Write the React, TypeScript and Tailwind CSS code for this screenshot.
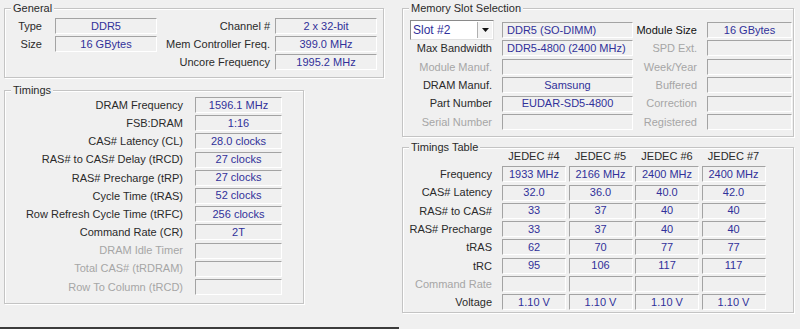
import React from "react";

const FONT = { fontFamily: '"Liberation Sans", Arial, sans-serif' };

function Group({ title, className, children }: { title: string; className: string; children?: React.ReactNode }) {
  return (
    <div className={"relative border border-[#c4c4c4] shadow-[inset_1px_1px_0_#ffffff,1px_1px_0_#ffffff] " + className}>
      <div className="absolute -top-[8px] left-[6px] px-[2px] bg-[#f0f0f0] leading-[14px] text-[#2a2a2a]">{title}</div>
      {children}
    </div>
  );
}

function Box({ children, className = "", align = "center" }: { children?: React.ReactNode; className?: string; align?: "center" | "left" }) {
  return (
    <div
      className={
        "h-[16px] border border-t-[#a3a3a3] border-l-[#a3a3a3] border-b-[#ffffff] border-r-[#ffffff] flex items-center text-[#30309a] leading-none whitespace-nowrap overflow-hidden " +
        (align === "center" ? "justify-center " : "justify-start pl-[4px] ") +
        className
      }
    >
      {children}
    </div>
  );
}

const dis = "text-[#a6a6a6]";
const lab = "text-[#2a2a2a]";

export default function App() {
  const timings: [string, string, boolean][] = [
    ["DRAM Frequency", "1596.1 MHz", true],
    ["FSB:DRAM", "1:16", true],
    ["CAS# Latency (CL)", "28.0 clocks", true],
    ["RAS# to CAS# Delay (tRCD)", "27 clocks", true],
    ["RAS# Precharge (tRP)", "27 clocks", true],
    ["Cycle Time (tRAS)", "52 clocks", true],
    ["Row Refresh Cycle Time (tRFC)", "256 clocks", true],
    ["Command Rate (CR)", "2T", true],
    ["DRAM Idle Timer", "", false],
    ["Total CAS# (tRDRAM)", "", false],
    ["Row To Column (tRCD)", "", false],
  ];
  const slotRows: [string, boolean, string, "center" | "left", string, boolean, string][] = [
    ["Max Bandwidth", true, "DDR5-4800 (2400 MHz)", "left", "SPD Ext.", false, ""],
    ["Module Manuf.", false, "", "center", "Week/Year", false, ""],
    ["DRAM Manuf.", true, "Samsung", "center", "Buffered", false, ""],
    ["Part Number", true, "EUDAR-SD5-4800", "center", "Correction", false, ""],
    ["Serial Number", false, "", "center", "Registered", false, ""],
  ];
  const table: [string, boolean, string[]][] = [
    ["Frequency", true, ["1933 MHz", "2166 MHz", "2400 MHz", "2400 MHz"]],
    ["CAS# Latency", true, ["32.0", "36.0", "40.0", "42.0"]],
    ["RAS# to CAS#", true, ["33", "37", "40", "40"]],
    ["RAS# Precharge", true, ["33", "37", "40", "40"]],
    ["tRAS", true, ["62", "70", "77", "77"]],
    ["tRC", true, ["95", "106", "117", "117"]],
    ["Command Rate", false, ["", "", "", ""]],
    ["Voltage", true, ["1.10 V", "1.10 V", "1.10 V", "1.10 V"]],
  ];

  return (
    <div className="flex w-[800px] h-[329px] bg-[#f0f0f0] text-[11px] overflow-hidden" style={FONT}>
      {/* Left panel */}
      <div className="w-[399px] h-[329px] flex flex-col border-b-2 border-[#3c3c3c]">
        <Group title="General" className="ml-[4px] mt-[8px] w-[380px] h-[70px]">
          <div className="flex flex-col gap-[2px] pt-[9px]">
            <div className="flex items-center h-[16px]">
              <div className={"w-[37px] text-right " + lab}>Type</div>
              <Box className="ml-[13px] w-[102px]">DDR5</Box>
              <div className={"w-[113px] text-right " + lab}>Channel #</div>
              <Box className="ml-[5px] w-[102px]">2 x 32-bit</Box>
            </div>
            <div className="flex items-center h-[16px]">
              <div className={"w-[37px] text-right " + lab}>Size</div>
              <Box className="ml-[13px] w-[102px]">16 GBytes</Box>
              <div className={"w-[113px] text-right " + lab}>Mem Controller Freq.</div>
              <Box className="ml-[5px] w-[102px]">399.0 MHz</Box>
            </div>
            <div className="flex items-center h-[16px]">
              <div className="w-[152px]" />
              <div className={"w-[113px] text-right " + lab}>Uncore Frequency</div>
              <Box className="ml-[5px] w-[102px]">1995.2 MHz</Box>
            </div>
          </div>
        </Group>
        <Group title="Timings" className="ml-[4px] mt-[12px] w-[300px] h-[214px]">
          <div className="flex flex-col gap-[2.2px] pt-[6px]">
            {timings.map(([l, v, en]) => (
              <div key={l} className="flex items-center h-[16px]">
                <div className={"w-[178px] text-right whitespace-nowrap " + (en ? lab : dis)}>{l}</div>
                <Box className="ml-[12px] w-[87px]">{v}</Box>
              </div>
            ))}
          </div>
        </Group>
      </div>

      {/* Right panel */}
      <div className="flex-1 h-[329px] flex flex-col">
        <Group title="Memory Slot Selection" className="ml-[3px] mt-[8px] w-[392px] h-[129px]">
          <div className="flex flex-col gap-[2.4px] pt-[13px]">
            <div className="flex items-center h-[16px]">
              <div className="ml-[7px] w-[84px] h-[20px] bg-white border border-t-[#8a8a8a] border-l-[#8a8a8a] border-b-[#e0e0e0] border-r-[#e0e0e0] flex items-center shrink-0">
                <span className="pl-[2px] flex-1 text-[#30309a] text-[12px] leading-none">Slot #2</span>
                <div className="w-[15px] h-[16px] mr-[1px] bg-[#f4f4f4] border-l border-[#b0b0b0] flex items-center justify-center">
                  <svg width="7" height="4" viewBox="0 0 7 4"><path d="M0 0h7L3.5 4z" fill="#111" /></svg>
                </div>
              </div>
              <Box align="left" className="ml-[8px] w-[131px]">DDR5 (SO-DIMM)</Box>
              <div className="w-[64px] text-right text-[#111111]">Module Size</div>
              <Box className="ml-[10px] w-[85px]">16 GBytes</Box>
            </div>
            {slotRows.map(([l, en, v, al, r, ren]) => (
              <div key={l} className="flex items-center h-[16px]">
                <div className={"w-[89px] text-right whitespace-nowrap " + (en ? lab : dis)}>{l}</div>
                <Box align={al} className="ml-[10px] w-[131px]">{v}</Box>
                <div className={"w-[64px] text-right whitespace-nowrap " + (ren ? lab : dis)}>{r}</div>
                <Box className="ml-[10px] w-[85px]" />
              </div>
            ))}
          </div>
        </Group>
        <Group title="Timings Table" className="ml-[3px] mt-[10px] w-[392px] h-[166px]">
          <div className="flex flex-col gap-[2.3px] pt-[0px]">
            <div className="flex items-center h-[16px]">
              <div className="w-[89px]" />
              <div className={"ml-[10px] flex gap-[2.5px] " + lab}>
                {["JEDEC #4", "JEDEC #5", "JEDEC #6", "JEDEC #7"].map((h) => (
                  <div key={h} className="w-[64px] text-center">{h}</div>
                ))}
              </div>
            </div>
            {table.map(([l, en, vals]) => (
              <div key={l} className="flex items-center h-[16px]">
                <div className={"w-[89px] text-right whitespace-nowrap " + (en ? lab : dis)}>{l}</div>
                <div className="ml-[10px] flex gap-[2.5px]">
                  {vals.map((v, i) => (
                    <Box key={i} className="w-[64px]">{v}</Box>
                  ))}
                </div>
              </div>
            ))}
          </div>
        </Group>
      </div>
    </div>
  );
}
